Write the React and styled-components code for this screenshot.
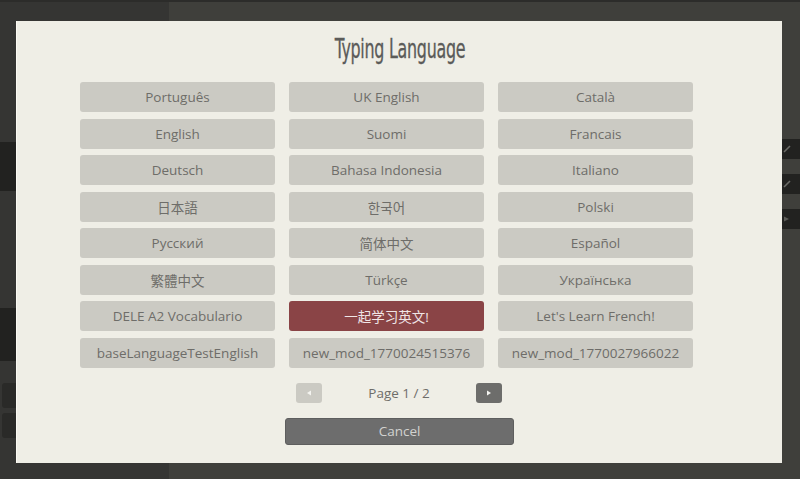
import React from "react";
import styled, { createGlobalStyle } from "styled-components";

const GlobalStyle = createGlobalStyle`
  html, body {
    margin: 0;
    padding: 0;
    background: #3f3f3b;
    overflow: hidden;
  }
`;

const Page = styled.div`
  position: relative;
  display: flex;
  width: 800px;
  height: 479px;
  border-top: 2px solid #2c2c2a;
  box-sizing: border-box;
`;

const Sidebar = styled.div`
  width: 169px;
  background: #353533;
  display: flex;
  flex-direction: column;
  padding-top: 140px;
`;

const SideBand = styled.div`
  height: ${(p) => p.h}px;
  margin-top: ${(p) => p.mt}px;
  background: #222220;
`;

const SideBox = styled.div`
  height: 25px;
  margin: ${(p) => p.mt}px 0 0 2px;
  width: 60px;
  border-radius: 3px;
  background: #2a2a28;
`;

const Main = styled.div`
  flex: 1;
  background: #3f3f3b;
  display: flex;
  flex-direction: column;
  align-items: flex-end;
  padding-top: 137px;
  gap: 15px;
`;

const MainRow = styled.div`
  width: 100%;
  height: 20px;
  background: #222220;
  display: flex;
  justify-content: flex-end;
  align-items: center;
  padding-right: 9px;
  box-sizing: border-box;
`;

const Modal = styled.div`
  position: absolute;
  left: 16px;
  top: 19px;
  width: 766px;
  height: 442px;
  background: #efeee6;
  border-left: 1px solid #fbfaf4;
  box-sizing: border-box;
  display: flex;
  flex-direction: column;
  align-items: center;
  font-family: "Open Sans", "Noto Sans CJK SC", sans-serif;
`;

const Title = styled.h1`
  margin: 13px 0 0;
  font-family: "DejaVu Sans Condensed", "DejaVu Sans", sans-serif;
  font-stretch: condensed;
  font-weight: normal;
  font-size: 26px;
  line-height: 31px;
  color: #5b5b59;
  transform: scaleX(0.68);
  letter-spacing: -0.4px;
  -webkit-text-stroke: 0.3px #5b5b59;
`;

const Grid = styled.div`
  align-self: flex-start;
  margin: 17px 0 0 63px;
  display: grid;
  grid-template-columns: repeat(3, 195px);
  grid-auto-rows: 30px;
  column-gap: 14px;
  row-gap: 6.5px;
`;

const LangButton = styled.div`
  display: flex;
  align-items: center;
  justify-content: center;
  border-radius: 3px;
  background: ${(p) => (p.active ? "#8a4446" : "#cbcac3")};
  color: ${(p) => (p.active ? "#f0e6e6" : "#6e6d69")};
  font-size: 13.5px;
  white-space: nowrap;
`;

const Pager = styled.div`
  display: flex;
  align-items: center;
  margin-top: 15px;
  margin-left: -1px;
`;

const PagerButton = styled.div`
  width: 26px;
  height: 20px;
  border-radius: 3px;
  background: ${(p) => (p.enabled ? "#6d6d6b" : "#cbcac3")};
  display: flex;
  align-items: center;
  justify-content: center;
`;

const PageLabel = styled.div`
  width: 154px;
  text-align: center;
  font-size: 13.5px;
  color: #6e6d69;
`;

const Cancel = styled.div`
  margin-top: 15px;
  width: 229px;
  height: 27px;
  border-radius: 3px;
  background: #6d6d6d;
  border: 1px solid #5e5e5e;
  box-sizing: border-box;
  color: #d2d2d0;
  font-size: 13.5px;
  display: flex;
  align-items: center;
  justify-content: center;
`;

const Arrow = ({ dir }) => (
  <svg width="6" height="6" viewBox="0 0 6 6">
    <path d={dir === "left" ? "M5 0.5 L1 3 L5 5.5 Z" : "M1 0.5 L5 3 L1 5.5 Z"} fill="#f4f4f0" />
  </svg>
);

const Pencil = () => (
  <svg width="8" height="8" viewBox="0 0 8 8">
    <path d="M1 7 L7 1" stroke="#6a6a66" strokeWidth="1.6" />
  </svg>
);

const Play = () => (
  <svg width="8" height="8" viewBox="0 0 8 8">
    <path d="M1 1.5 L6 4 L1 6.5 Z" fill="#5a5a56" />
  </svg>
);

const languages = [
  "Português", "UK English", "Català",
  "English", "Suomi", "Francais",
  "Deutsch", "Bahasa Indonesia", "Italiano",
  "日本語", "한국어", "Polski",
  "Русский", "简体中文", "Español",
  "繁體中文", "Türkçe", "Українська",
  "DELE A2 Vocabulario", "一起学习英文!", "Let's Learn French!",
  "baseLanguageTestEnglish", "new_mod_1770024515376", "new_mod_1770027966022",
];

export default function App() {
  return (
    <>
      <GlobalStyle />
      <Page>
        <Sidebar>
          <SideBand h={49} mt={0} />
          <SideBand h={53} mt={117} />
          <SideBox mt={22} />
          <SideBox mt={5} />
        </Sidebar>
        <Main>
          <MainRow><Pencil /></MainRow>
          <MainRow><Pencil /></MainRow>
          <MainRow><Play /></MainRow>
        </Main>
        <Modal>
          <Title>Typing Language</Title>
          <Grid>
            {languages.map((name) => (
              <LangButton key={name} active={name === "一起学习英文!"}>
                {name}
              </LangButton>
            ))}
          </Grid>
          <Pager>
            <PagerButton><Arrow dir="left" /></PagerButton>
            <PageLabel>Page 1 / 2</PageLabel>
            <PagerButton enabled><Arrow dir="right" /></PagerButton>
          </Pager>
          <Cancel>Cancel</Cancel>
        </Modal>
      </Page>
    </>
  );
}
